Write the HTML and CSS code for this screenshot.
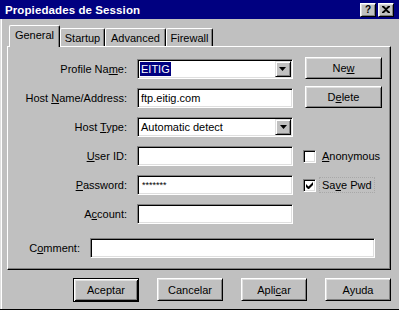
FILE: index.html
```html
<!DOCTYPE html>
<html lang="es">
<head>
<meta charset="utf-8">
<title>Propiedades de Session</title>
<link rel="stylesheet" href="styles.css">
</head>
<body>
<div class="window">
  <div class="titlebar">
    <span class="title">Propiedades de Session</span>
    <div class="tbtns">
      <span class="tbtn help">?</span>
      <span class="tbtn close"><svg width="8" height="7" viewBox="0 0 8 7"><path d="M0 0h2l2 2 2-2h2v1L5 3.5 8 6v1H6L4 5 2 7H0V6l3-2.5L0 1z" fill="#000"/></svg></span>
    </div>
  </div>
  <div class="dlgbody">
    <div class="tabs">
      <div class="tab sel t-general">General</div>
      <div class="tab t-startup">Startup</div>
      <div class="tab t-advanced">Advanced</div>
      <div class="tab t-firewall">Firewall</div>
    </div>
    <div class="panel">
      <div class="form">
        <div class="lbl"><span>Profile Na<u>m</u>e:</span></div>
        <div class="field combo"><span class="seltext">EITIG</span><span class="ddbtn"><svg width="7" height="4" viewBox="0 0 7 4"><path d="M0 0h7L3.5 4z" fill="#000"/></svg></span></div>
        <div class="btn side"><span>Ne<u>w</u></span></div>

        <div class="lbl"><span>Host <u>N</u>ame/Address:</span></div>
        <div class="field"><span class="val">ftp.eitig.com</span></div>
        <div class="btn side"><span>D<u>e</u>lete</span></div>

        <div class="lbl"><span>Host <u>T</u>ype:</span></div>
        <div class="field combo"><span class="val">Automatic detect</span><span class="ddbtn"><svg width="7" height="4" viewBox="0 0 7 4"><path d="M0 0h7L3.5 4z" fill="#000"/></svg></span></div>
        <div></div>

        <div class="lbl"><span><u>U</u>ser ID:</span></div>
        <div class="field"></div>
        <div class="check"><span class="box"></span><span class="clabel"><u>A</u>nonymous</span></div>

        <div class="lbl"><span><u>P</u>assword:</span></div>
        <div class="field"><span class="val pwd">*******</span></div>
        <div class="check"><span class="box"><svg width="7" height="7" viewBox="0 0 7 7"><path d="M0 2v3l2 2h1l4-4V0L2.5 4.5z" fill="#000"/></svg></span><span class="clabel focus">Sa<u>v</u>e Pwd</span></div>

        <div class="lbl"><span>A<u>c</u>count:</span></div>
        <div class="field"></div>
        <div></div>
      </div>
      <div class="comment">
        <div class="lbl"><span>C<u>o</u>mment:</span></div>
        <div class="field"></div>
      </div>
    </div>
    <div class="actions">
      <div class="btn act default">Aceptar</div>
      <div class="btn act">Cancelar</div>
      <div class="btn act"><span>Apli<u>c</u>ar</span></div>
      <div class="btn act">Ayuda</div>
    </div>
  </div>
</div>
</body>
</html>
```
FILE: styles.css
```css
* { box-sizing: border-box; }
html, body { margin: 0; padding: 0; }
body {
  width: 399px;
  height: 310px;
  background: #c0c0c0;
  font-family: "Liberation Sans", Arial, sans-serif;
  font-size: 11px;
  color: #000;
  overflow: hidden;
}
u { text-decoration: underline; text-underline-offset: 1px; }
.window {
  width: 399px;
  height: 310px;
  display: flex;
  flex-direction: column;
  background: #c0c0c0;
}
.titlebar {
  height: 19px;
  flex: none;
  background: #000080;
  display: flex;
  align-items: center;
  justify-content: space-between;
  padding: 0 5px 0 5px;
}
.title {
  color: #fff;
  font-weight: bold;
  font-size: 11.5px;
  letter-spacing: 0.1px;
}
.tbtns { display: flex; gap: 2px; }
.tbtn {
  width: 16px;
  height: 14px;
  background: #c0c0c0;
  border: 1px solid;
  border-color: #fff #000 #000 #fff;
  box-shadow: inset 1px 1px #dfdfdf, inset -1px -1px #808080;
  display: flex;
  align-items: center;
  justify-content: center;
  font-weight: bold;
  font-size: 10px;
  line-height: 1;
}
.dlgbody {
  flex: 1;
  display: flex;
  flex-direction: column;
  box-shadow: inset 1px 0 #dfdfdf, inset 2px 0 #fff;
  border-bottom: 1px solid #000;
}
.tabs {
  height: 21px;
  margin-top: 6px;
  margin-left: 9px;
  display: flex;
  align-items: flex-end;
}
.tab {
  height: 18px;
  border-top: 1px solid #fff;
  border-left: 1px solid #fff;
  border-right: 1px solid #000;
  box-shadow: inset -1px 0 #808080;
  border-radius: 2px 2px 0 0;
  display: flex;
  align-items: center;
  justify-content: center;
  padding-top: 1px;
  background: #c0c0c0;
}
.tab.sel {
  height: 22px;
  margin-bottom: -1px;
  position: relative;
  z-index: 1;
  padding-top: 0;
  padding-bottom: 3px;
}
.t-general { width: 51px; }
.t-startup { width: 45px; }
.t-advanced { width: 61px; }
.t-firewall { width: 47px; }
.panel {
  margin-left: 7px;
  width: 384px;
  height: 224px;
  flex: none;
  border: 1px solid;
  border-color: #fff #000 #000 #fff;
  box-shadow: inset -1px -1px #808080;
  padding-top: 12px;
}
.form {
  display: grid;
  grid-template-columns: 119px 156px 89px;
  grid-auto-rows: 20px;
  column-gap: 10px;
  row-gap: 9px;
}
.lbl {
  display: flex;
  align-items: center;
  justify-content: flex-end;
  white-space: nowrap;
}
.field {
  height: 20px;
  background: #fff;
  border: 1px solid;
  border-color: #808080 #fff #fff #808080;
  box-shadow: inset 1px 1px #000, inset -1px -1px #dfdfdf;
  display: flex;
  align-items: center;
  padding: 1px 1px 1px 2px;
}
.val { padding-left: 1px; white-space: nowrap; flex: 1; }
.pwd { font-size: 9px; letter-spacing: 0; padding-left: 2px; }
.seltext {
  background: #000080;
  color: #fff;
  padding: 0 1px;
  line-height: 14px;
  margin-right: auto;
}
.ddbtn {
  width: 16px;
  height: 16px;
  margin-left: auto;
  background: #c0c0c0;
  border: 1px solid;
  border-color: #dfdfdf #000 #000 #dfdfdf;
  box-shadow: inset 1px 1px #fff, inset -1px -1px #808080;
  display: flex;
  align-items: center;
  justify-content: center;
}
.btn {
  background: #c0c0c0;
  border: 1px solid;
  border-color: #fff #000 #000 #fff;
  box-shadow: inset 1px 1px #dfdfdf, inset -1px -1px #808080;
  display: flex;
  align-items: center;
  justify-content: center;
  white-space: nowrap;
}
.side {
  width: 77px;
  height: 22px;
  margin-left: 2px;
  margin-top: -2px;
}
.check {
  display: flex;
  align-items: center;
  gap: 4px;
}
.box {
  width: 13px;
  height: 13px;
  background: #fff;
  border: 1px solid;
  border-color: #808080 #fff #fff #808080;
  box-shadow: inset 1px 1px #000, inset -1px -1px #dfdfdf;
  display: flex;
  align-items: center;
  justify-content: center;
}
.clabel { padding: 1px 2px; }
.focus { outline: 1px dotted #a8a8a8; outline-offset: 0; }
.comment {
  display: grid;
  grid-template-columns: 72px 285px;
  column-gap: 10px;
  margin-top: 14px;
}
.actions {
  display: flex;
  justify-content: flex-end;
  gap: 18px;
  padding-right: 8px;
  margin-top: 8px;
}
.act {
  width: 66px;
  height: 23px;
}
.act.default {
  height: 24px;
  border-color: #000;
  box-shadow: inset 1px 1px #fff, inset -1px -1px #000, inset 2px 2px #dfdfdf, inset -2px -2px #808080;
}
```
